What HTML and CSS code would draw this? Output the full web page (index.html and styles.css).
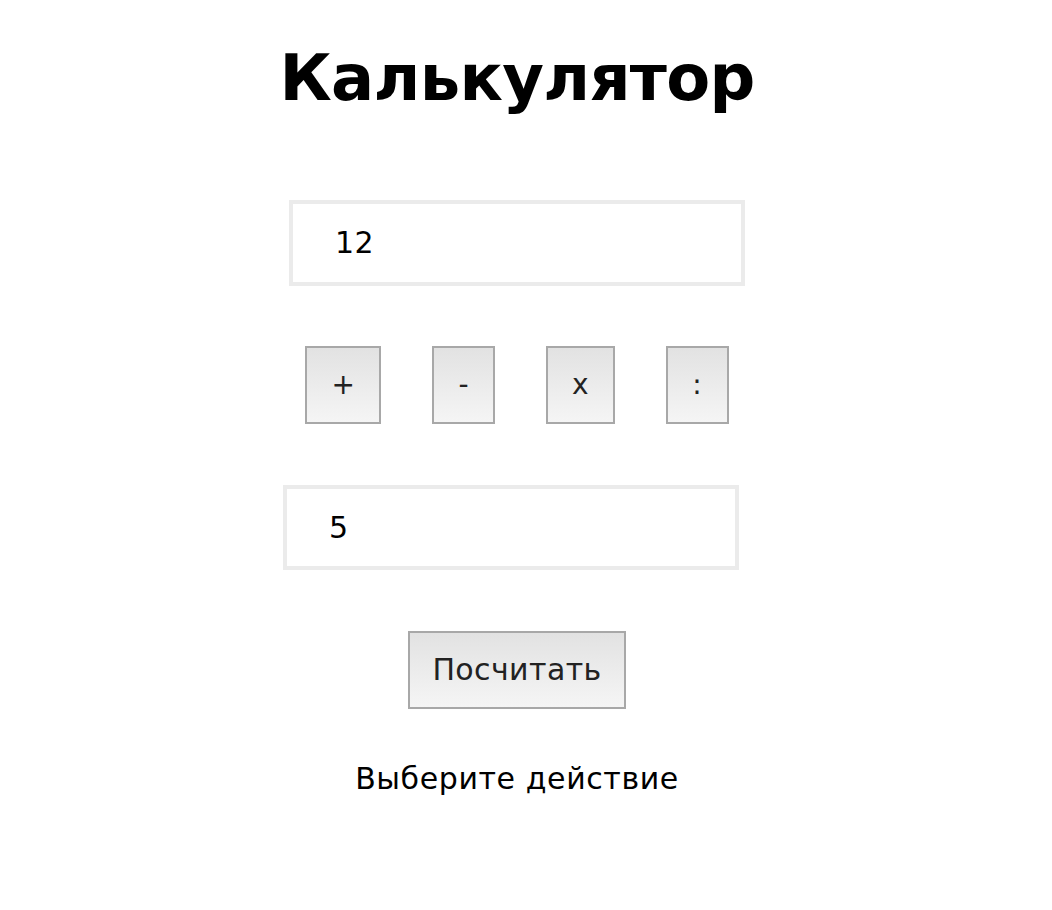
FILE: index.html
```html
<!doctype html>
<html>
<head>
  <title>Калькулятор</title>
  <link rel="stylesheet" href="styles.css">
</head>
<body>
  <div class="calc">
    <h1>Калькулятор</h1>
    <input class="field" id="first" type="text" value="12">
    <div class="ops">
      <button class="op">+</button>
      <button class="op">-</button>
      <button class="op">x</button>
      <button class="op">:</button>
    </div>
    <input class="field field-second" id="second" type="text" value="5">
    <button class="run" id="run">Посчитать</button>
    <p class="result" id="result">Выберите действие</p>
  </div>
</body>
</html>
```
FILE: styles.css
```css
body {
  margin: 0 18px 0 0;
  font-family: "DejaVu Sans", Verdana, sans-serif;
  color: #000;
  background: #fff;
}

.calc {
  width: 456px;
  margin: 0 auto;
  display: flex;
  flex-direction: column;
  align-items: center;
}

h1 {
  font-size: 64px;
  letter-spacing: -0.7px;
  margin: 40px 0 83px;
  line-height: 1.2;
}

.field {
  box-sizing: border-box;
  width: 456px;
  height: 86px;
  border: 4px solid #ebebeb;
  padding: 0 0 0 42px;
  font: 30px "DejaVu Sans", Verdana, sans-serif;
  letter-spacing: 0.5px;
  color: #000;
  outline: none;
}
.field-second {
  margin-right: 12px;
  height: 85px;
}

.ops {
  display: flex;
  gap: 51px;
  margin: 60px 0 61px;
}

.op, .run {
  font: 28px "DejaVu Sans", Verdana, sans-serif;
  color: #222;
  border: 2px solid #a8a8a8;
  background: linear-gradient(#e2e2e2, #f5f5f5);
  border-radius: 0;
  height: 78px;
  padding: 0 24px;
}
.op {
  min-width: 63px;
}

.run {
  margin-top: 61px;
  padding: 0 22px;
  font-size: 30px;
  letter-spacing: 0.4px;
}

.result {
  font-size: 30px;
  letter-spacing: 0.6px;
  margin: 52px 0 0;
}
```
